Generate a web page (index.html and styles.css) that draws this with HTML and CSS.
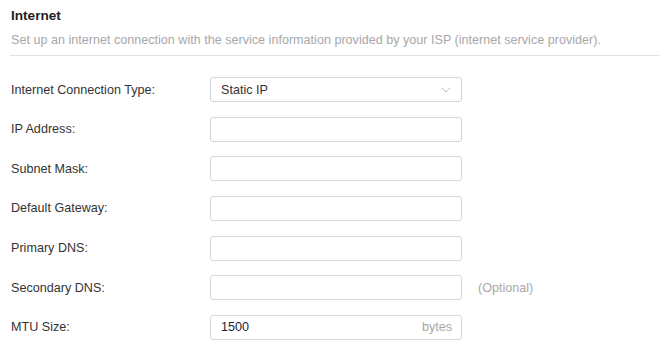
FILE: index.html
```html
<!DOCTYPE html>
<html lang="en">
<head>
    <meta charset="UTF-8">
    <title>Internet</title>
    <link rel="stylesheet" href="styles.css">
</head>
<body>
    <div class="panel">
        <h2 class="title">Internet</h2>
        <p class="desc">Set up an internet connection with the service information provided by your ISP (internet service provider).</p>
        <div class="form">
            <div class="row">
                <label>Internet Connection Type:</label>
                <div class="field select">
                    <span class="value">Static IP</span>
                    <svg class="arrow" width="10" height="6" viewBox="0 0 10 6"><path d="M1 1 L5 5 L9 1" fill="none" stroke="#bdbdbd" stroke-width="1"/></svg>
                </div>
            </div>
            <div class="row">
                <label>IP Address:</label>
                <div class="field"></div>
            </div>
            <div class="row">
                <label>Subnet Mask:</label>
                <div class="field"></div>
            </div>
            <div class="row">
                <label>Default Gateway:</label>
                <div class="field"></div>
            </div>
            <div class="row">
                <label>Primary DNS:</label>
                <div class="field"></div>
            </div>
            <div class="row">
                <label>Secondary DNS:</label>
                <div class="field"></div>
                <span class="hint">(Optional)</span>
            </div>
            <div class="row">
                <label>MTU Size:</label>
                <div class="field">
                    <span class="value num">1500</span>
                    <span class="unit">bytes</span>
                </div>
            </div>
        </div>
    </div>
</body>
</html>
```

FILE: styles.css
```css
body {
    margin: 0;
    padding: 0;
    background: #fff;
    font-family: "Liberation Sans", Arial, sans-serif;
    font-size: 12.6px;
    color: #333;
}
.panel {
    padding: 6px 6px 0 11px;
}
.title {
    margin: 0;
    font-size: 13.6px;
    font-weight: bold;
    color: #1e1e1e;
    line-height: 20px;
}
.desc {
    margin: 6px 0 0 -1px;
    padding: 0 0 7px 1px;
    color: #a8a8a8;
    line-height: 16px;
    border-bottom: 1px solid #e3e3e3;
}
.form {
    padding-top: 21px;
}
.row {
    display: flex;
    align-items: center;
    height: 25px;
    margin-bottom: 14.67px;
}
.row label {
    width: 199px;
    flex: none;
}
.field {
    height: 23px;
    border: 1px solid #d6d6d6;
    border-radius: 3px;
    display: flex;
    align-items: center;
    justify-content: space-between;
    padding: 0 9px 0 10px;
    box-sizing: content-box;
    width: 231px;
}
.value {
    color: #333;
}
.num {
    color: #1c1c34;
}
.arrow {
    margin-right: 1px;
}
.unit {
    color: #a8a8a8;
}
.hint {
    margin-left: 16px;
    color: #a8a8a8;
}
```
